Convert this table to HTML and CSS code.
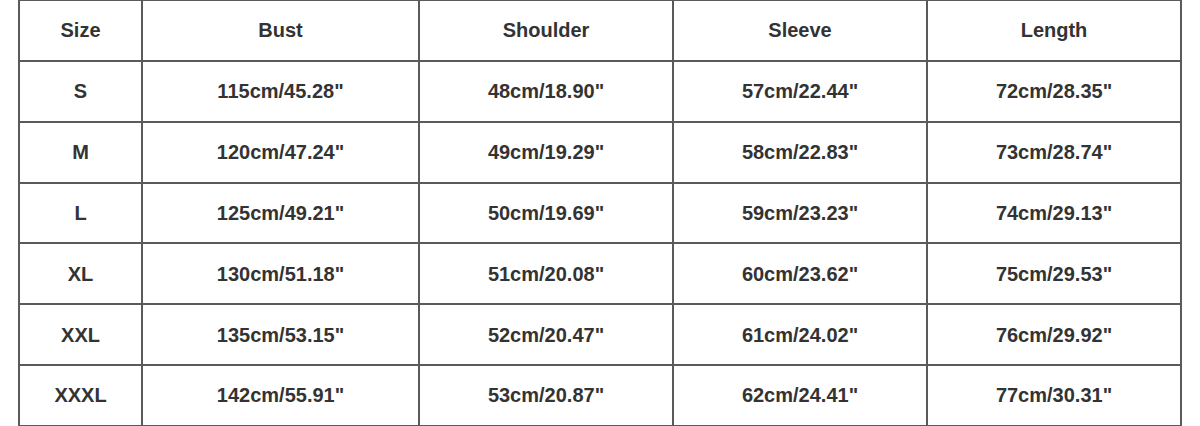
FILE: index.html
```html
<!DOCTYPE html>
<html>
<head>
<meta charset="utf-8">
<link rel="stylesheet" href="styles.css">
</head>
<body>
<table class="size-table">
  <colgroup>
    <col class="c-size">
    <col class="c-bust">
    <col class="c-mid">
    <col class="c-mid">
    <col class="c-mid">
  </colgroup>
  <tr><td>Size</td><td>Bust</td><td>Shoulder</td><td>Sleeve</td><td>Length</td></tr>
  <tr><td>S</td><td>115cm/45.28"</td><td>48cm/18.90"</td><td>57cm/22.44"</td><td>72cm/28.35"</td></tr>
  <tr><td>M</td><td>120cm/47.24"</td><td>49cm/19.29"</td><td>58cm/22.83"</td><td>73cm/28.74"</td></tr>
  <tr><td>L</td><td>125cm/49.21"</td><td>50cm/19.69"</td><td>59cm/23.23"</td><td>74cm/29.13"</td></tr>
  <tr><td>XL</td><td>130cm/51.18"</td><td>51cm/20.08"</td><td>60cm/23.62"</td><td>75cm/29.53"</td></tr>
  <tr><td>XXL</td><td>135cm/53.15"</td><td>52cm/20.47"</td><td>61cm/24.02"</td><td>76cm/29.92"</td></tr>
  <tr><td>XXXL</td><td>142cm/55.91"</td><td>53cm/20.87"</td><td>62cm/24.41"</td><td>77cm/30.31"</td></tr>
</table>
</body>
</html>
```
FILE: styles.css
```css
html, body {
  margin: 0;
  padding: 0;
  background: #ffffff;
}
body {
  padding-left: 18px;
  font-family: "Liberation Sans", Arial, sans-serif;
}
.size-table {
  border-collapse: collapse;
  table-layout: fixed;
  width: 1164px;
  margin-top: -1px;
}
.c-size { width: 123px; }
.c-bust { width: 277px; }
.c-mid { width: 254px; }
.size-table td {
  border: 2px solid #5a5a5a;
  height: 57.85px;
  padding: 1px 0 0 0;
  text-align: center;
  vertical-align: middle;
  font-size: 20px;
  font-weight: bold;
  color: #333333;
}
```
